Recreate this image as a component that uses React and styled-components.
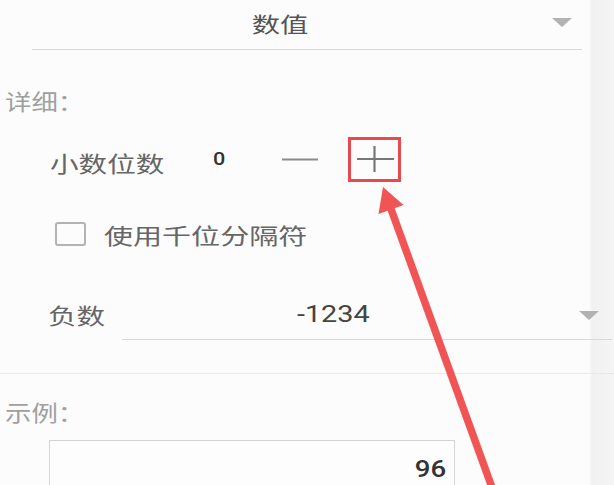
import React from "react";
import styled, { createGlobalStyle } from "styled-components";

const GlobalStyle = createGlobalStyle`
  html, body { margin: 0; padding: 0; }
  body { background: #fcfcfc; font-family: "Noto Sans CJK SC", "Noto Sans", sans-serif; }
`;

const Page = styled.div`
  position: relative;
  width: 614px;
  height: 485px;
  overflow: hidden;
  background: linear-gradient(to right, #fcfcfc 0, #fcfcfc 589px, #f1f1f1 592px, #f5f5f5 614px);
`;

const Text = styled.span`
  display: inline-block;
  font-family: ${(p) => (p.$num ? "Roboto, 'Liberation Sans', sans-serif" : "'Noto Sans CJK SC', 'Noto Sans', sans-serif")};
  font-size: ${(p) => p.$size}px;
  font-weight: ${(p) => p.$weight || 400};
  color: ${(p) => p.$color};
  line-height: 1;
  white-space: nowrap;
  transform: scaleX(${(p) => p.$sx || 1.3});
  transform-origin: ${(p) => p.$origin || "left"} center;
  margin-top: ${(p) => p.$mt || 0}px;
  margin-bottom: ${(p) => p.$mb || 0}px;
`;

const Select = styled.div`
  display: flex;
  align-items: center;
  height: ${(p) => p.$h}px;
  border-bottom: 1.5px solid #d9d9d9;
`;

const TopSelect = styled(Select)`
  margin: 0 32px;
`;

const RowSelect = styled(Select)`
  flex: 1;
  margin-right: 2px;
`;

const SelectValue = styled.div`
  flex: 1;
  display: flex;
  justify-content: center;
  padding-right: ${(p) => p.$pr}px;
`;

const Caret = styled.span`
  width: 0;
  height: 0;
  border-left: 10px solid transparent;
  border-right: 10px solid transparent;
  border-top: 9px solid #b2b2b2;
  margin-right: ${(p) => p.$mr}px;
  margin-top: ${(p) => p.$mt || 0}px;
  margin-bottom: ${(p) => p.$mb || 0}px;
`;

const SectionTitle = styled.div`
  display: flex;
  align-items: center;
  height: 40px;
  padding-left: 5px;
  margin-top: ${(p) => p.$mt}px;
`;

const Row = styled.div`
  display: flex;
  align-items: center;
  height: ${(p) => p.$h}px;
  padding-left: ${(p) => p.$pl}px;
  margin-top: ${(p) => p.$mt}px;
`;

const Cell = styled.div`
  flex-shrink: 0;
  width: ${(p) => p.$w}px;
  display: flex;
  align-items: center;
`;

const StepButton = styled.div`
  flex-shrink: 0;
  box-sizing: border-box;
  width: ${(p) => p.$w}px;
  height: 45px;
  display: flex;
  align-items: center;
  justify-content: center;
  margin-right: ${(p) => p.$mr || 0}px;
  border: ${(p) => (p.$highlight ? "3px solid #e8494f" : "none")};
`;

const CheckBox = styled.div`
  flex-shrink: 0;
  box-sizing: border-box;
  width: 31px;
  height: 24px;
  border: 2px solid #b3b3b3;
  border-radius: 3px;
  margin-right: 18px;
`;

const Separator = styled.div`
  height: 1px;
  background: #e9e9e9;
  margin-top: 34px;
`;

const ExampleBox = styled.div`
  box-sizing: border-box;
  width: 406px;
  height: 70px;
  margin: 9px 0 0 49px;
  border: 1px solid #d4d4d4;
  border-bottom: none;
  display: flex;
  justify-content: flex-end;
  align-items: flex-start;
  padding: 17px 8px 0 0;
  background: #fdfdfd;
`;

const Overlay = styled.svg`
  position: absolute;
  left: 0;
  top: 0;
  pointer-events: none;
`;

export default function App() {
  return (
    <>
      <GlobalStyle />
      <Page>
        <TopSelect $h={49}>
          <SelectValue $pr={24}>
            <Text $size={21} $color="#555" $sx={1.35} $origin="center" $mb={3}>数值</Text>
          </SelectValue>
          <Caret $mr={10} $mb={4} />
        </TopSelect>

        <SectionTitle $mt={30}>
          <Text $size={22} $color="#a0a0a0" $sx={1.2}>详细：</Text>
        </SectionTitle>

        <Row $h={50} $pl={50} $mt={14}>
          <Cell $w={163}>
            <Text $size={22} $color="#666" $mt={5}>小数位数</Text>
          </Cell>
          <Cell $w={69}>
            <Text $num $size={18} $weight={500} $color="#333" $sx={1.2} $mb={1}>0</Text>
          </Cell>
          <StepButton $w={36} $mr={30}>
            <svg width="36" height="3" viewBox="0 0 36 3">
              <line x1="0" y1="1.5" x2="36" y2="1.5" stroke="#8a8a8a" strokeWidth="2" />
            </svg>
          </StepButton>
          <StepButton $w={53} $highlight>
            <svg width="38" height="27" viewBox="0 0 38 27">
              <line x1="1" y1="13" x2="38" y2="13" stroke="#777" strokeWidth="2.2" />
              <line x1="18.5" y1="0" x2="18.5" y2="26" stroke="#777" strokeWidth="2.2" />
            </svg>
          </StepButton>
        </Row>

        <Row $h={40} $pl={55} $mt={30}>
          <CheckBox />
          <Text $size={22} $color="#666" $sx={1.32}>使用千位分隔符</Text>
        </Row>

        <Row $h={50} $pl={48} $mt={35}>
          <Cell $w={74}>
            <Text $size={22} $color="#666">负数</Text>
          </Cell>
          <RowSelect $h={50}>
            <SelectValue $pr={34}>
              <Text $num $size={24} $color="#444" $sx={1.2} $origin="center">-1234</Text>
            </SelectValue>
            <Caret $mr={13} $mt={3} />
          </RowSelect>
        </Row>

        <Separator />

        <SectionTitle $mt={17}>
          <Text $size={22} $color="#a0a0a0" $sx={1.2}>示例：</Text>
        </SectionTitle>

        <ExampleBox>
          <Text $num $size={23} $weight={500} $color="#333" $sx={1.2} $origin="right">96</Text>
        </ExampleBox>

        <Overlay width="614" height="485" viewBox="0 0 614 485">
          <line x1="391" y1="209" x2="502" y2="515" stroke="#f05454" strokeWidth="7.5" />
          <polygon points="383,187 378.5,214 403.5,205" fill="#f05454" />
        </Overlay>
      </Page>
    </>
  );
}
